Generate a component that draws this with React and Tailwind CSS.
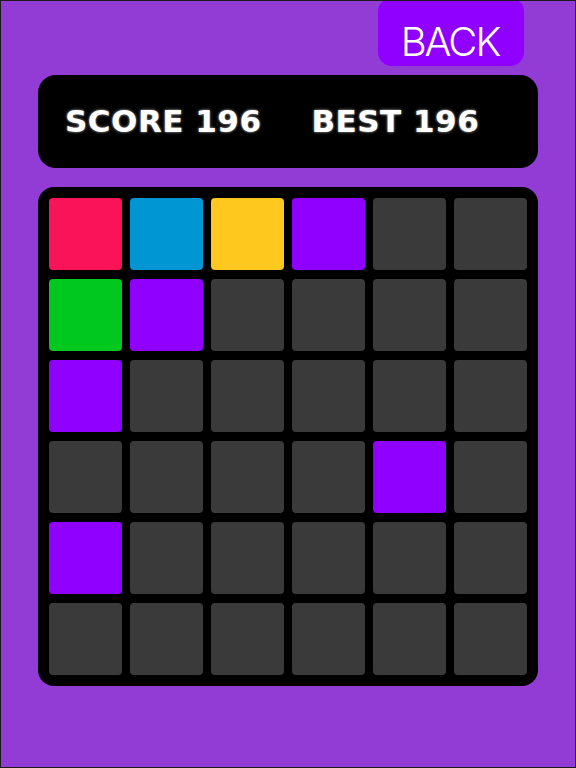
const GRID = [
  ['red', 'blue', 'yellow', 'purple', null, null],
  ['green', 'purple', null, null, null, null],
  ['purple', null, null, null, null, null],
  [null, null, null, null, 'purple', null],
  ['purple', null, null, null, null, null],
  [null, null, null, null, null, null],
];

const TILE = {
  red: 'bg-[#fa1358]',
  blue: 'bg-[#0096d3]',
  yellow: 'bg-[#ffc81e]',
  green: 'bg-[#00c81e]',
  purple: 'bg-[#9000ff]',
};

function Scoreboard({ score, best }) {
  return (
    <div
      className="mx-[37px] h-[93px] rounded-[18px] bg-black flex items-center gap-[50px] pl-[27px] text-white font-bold text-[31px] tracking-[0.5px] whitespace-pre [text-shadow:0_0_3px_rgba(255,255,255,0.7)]"
      style={{ fontFamily: '"DejaVu Sans", sans-serif' }}
    >
      <span>{`SCORE ${score}`}</span>
      <span>{`BEST ${best}`}</span>
    </div>
  );
}

export default function App() {
  return (
    <div className="w-[576px] h-[768px] border border-[#1a1a1a] bg-[#933bd5] flex flex-col overflow-hidden">
      <button
        className="self-end mr-[51px] -mt-px w-[146px] h-[66px] rounded-b-[14px] rounded-t-[10px] bg-[#9000ff] text-white text-[40px] leading-none font-light pt-[18px] pr-[2px] tracking-[-2px]"
        style={{ fontFamily: 'Inter, sans-serif' }}
      >
        BACK
      </button>

      <div className="mt-[9px]">
        <Scoreboard score={196} best={196} />
      </div>

      <div className="mt-[19px] mx-[37px] w-[500px] h-[499px] rounded-[16px] bg-black p-[11px] grid grid-cols-6 gap-[8.6px]">
        {GRID.flat().map((c, i) => (
          <div key={i} className={`rounded-[4px] ${c ? TILE[c] : 'bg-[#3a3a3a]'}`} />
        ))}
      </div>
    </div>
  );
}
